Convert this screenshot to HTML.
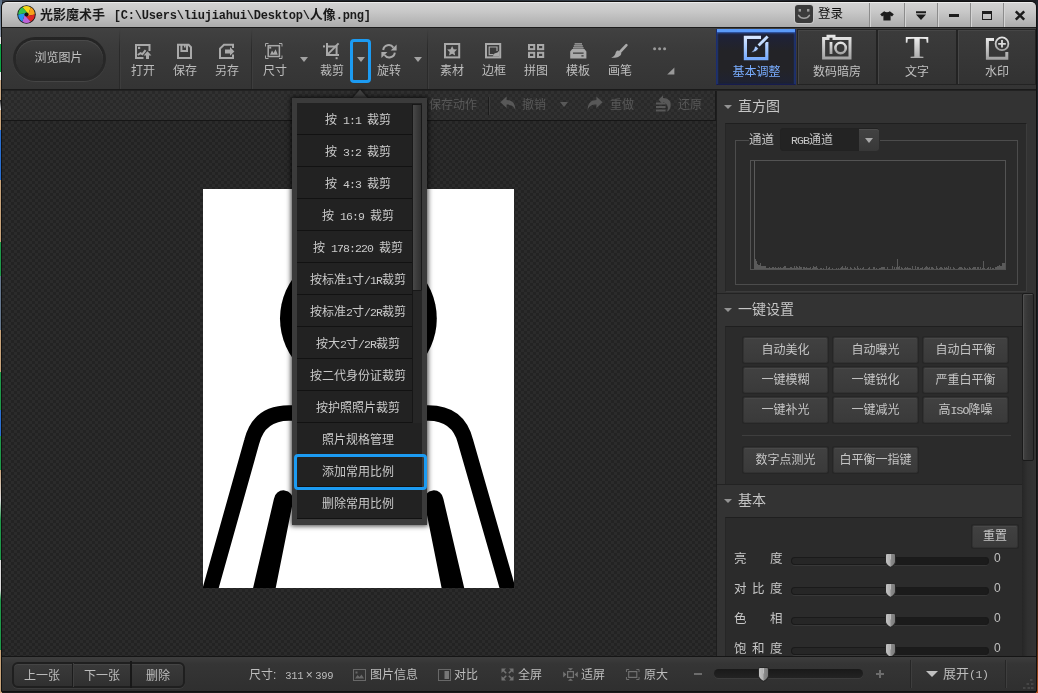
<!DOCTYPE html>
<html lang="zh">
<head>
<meta charset="utf-8">
<title>光影魔术手</title>
<style>
*{box-sizing:border-box;margin:0;padding:0}
html,body{width:1038px;height:693px;overflow:hidden;background:#1a1c22}
body{position:relative;font-family:"Liberation Sans","Noto Sans CJK SC",sans-serif;font-size:12px;color:#c4c4c4;line-height:1}
.a{position:absolute}
.t{position:absolute;white-space:nowrap;text-align:center;line-height:14px;font-size:12px}
svg{position:absolute;overflow:visible}
/* desktop slivers */
#deskL{left:0;top:0;width:2px;height:693px;background:linear-gradient(#5b6f86 0,#7d8da0 30px,#8a94a4 30px,#8a94a4 37px,#e6e6e6 37px,#e6e6e6 44px,#0ea244 44px,#0ea244 72px,#e6e6e6 72px,#e6e6e6 80px,#c9a884 80px,#c9a884 100px,#222 100px,#eee 110px,#c9a47a 110px,#c9a47a 130px,#2a6fd0 130px,#2a6fd0 180px,#c9a47a 180px,#c9a47a 242px,#1f9a4a 242px,#1f9a4a 276px,#66788e 276px,#66788e 330px,#c9a47a 330px,#c9a47a 372px,#1f9a4a 372px,#1f9a4a 410px,#2a6fd0 410px,#2a6fd0 436px,#1f9a4a 436px,#1f9a4a 470px,#c9a47a 470px,#ddd 500px,#1f9a4a 520px,#1f9a4a 560px,#ddd 560px,#ddd 590px,#1f9a4a 600px,#1f9a4a 650px,#c9a47a 650px,#c9a47a 693px)}
#deskR{left:1036px;top:0;width:2px;height:693px;background:linear-gradient(#20242c 0,#1b1e26 300px,#221c1c 560px,#5a2a14 640px,#b4501a 693px)}
#deskT{left:0;top:0;width:1038px;height:2px;background:linear-gradient(90deg,#3a4250 0,#20242a 8%,#2c323c 20%,#1e2228 35%,#2a3038 50%,#4a5666 66%,#20242a 76%,#15171a 84%,#1c1e22 100%)}
#deskB{left:0;top:691px;width:1038px;height:2px;background:#1b1b1b}
/* window */
#win{left:1px;top:1px;width:1036px;height:691px;background:#2b2b2b;border:1px solid #111;border-radius:6px 6px 0 0}
/* title */
#title{left:2px;top:2px;width:1034px;height:25px;border-radius:5px 5px 0 0;background:linear-gradient(#d2d2d2 0,#c9c9c9 8px,#b9b9b9 17px,#a9a9a9 25px);border-top:1px solid #ebebeb}
#title .tt{left:38px;top:4px;font-size:13px;line-height:16px;font-weight:bold;color:#1a1a1a;white-space:nowrap}
#title .tt span{font-family:"Liberation Mono",monospace;font-size:12px;letter-spacing:-0.2px}
.tsep{top:0;width:2px;height:25px;background:linear-gradient(90deg,#8c8c8c 50%,#d4d4d4 50%)}
/* toolbar */
#tb{left:2px;top:27px;width:1034px;height:62px;background:linear-gradient(#1c1c1c 0,#1c1c1c 1px,#414141 1px,#3b3b3b 20px,#343434 61px);}
#tbline{left:2px;top:89px;width:1034px;height:2px;background:linear-gradient(#1a1a1a 0,#1a1a1a 1px,#222 1px,#222 2px)}
.vsep{width:2px;background:linear-gradient(90deg,#2a2a2a 50%,#3d3d3d 50%);-webkit-mask-image:linear-gradient(transparent 0,#000 35%);mask-image:linear-gradient(transparent 0,#000 35%)}
.tl{color:#bdbdbd}

/* browse button */
#browse{left:13px;top:37px;width:93px;height:44px;border-radius:22px;background:linear-gradient(#242424,#2a2a2a);box-shadow:0 1px 0 #454545}
#browse i{position:absolute;left:3px;top:3px;width:87px;height:38px;border-radius:19px;background:linear-gradient(#3d3d3d,#333 45%,#2c2c2c);box-shadow:inset 0 1px 0 #4a4a4a}
#browse b{position:absolute;left:-1px;top:14px;width:93px;text-align:center;font-weight:normal;font-size:12px;line-height:14px;color:#c2c2c2}
.ic{fill:none;stroke:#a9a9a9;stroke-width:2}
.if{fill:#a9a9a9;stroke:none}
.dd{width:0;height:0;border:4px solid transparent;border-top:5px solid #a2a2a2;border-bottom:0}
#cropdd{left:350px;top:39px;width:21px;height:44px;border:3px solid #1c9bf2;border-radius:4px}
/* tabs */
.tab{top:29px;width:80px;height:56px;background:linear-gradient(#3b3b3b,#323232);border:1px solid #232323;box-shadow:inset 1px 1px 0 #464646}
.tab.sel{background:linear-gradient(#1c2448 0,#1f2236 9px,#232327 22px,#232327 40px,#1e2234 56px);border:1px solid #1c2c70;border-top:0;border-bottom-color:#171b4c;box-shadow:inset 0 3px 0 #5b9bfa,inset 0 4px 2px #3464c0,inset 1px 0 2px #1a2448,inset -1px 0 2px #1a2448}
.tabt{color:#c0c0c0}

.tk{fill:#1c1c1c}
/* canvas */
.chk{background-image:linear-gradient(45deg,rgba(255,255,255,.036) 25%,transparent 25%,transparent 75%,rgba(255,255,255,.036) 75%),linear-gradient(45deg,rgba(255,255,255,.036) 25%,transparent 25%,transparent 75%,rgba(255,255,255,.036) 75%);background-size:6px 6px;background-position:0 0,3px 3px}
#ctb{left:2px;top:91px;width:714px;height:30px;background-color:#292929;border-right:1px solid #191919;border-bottom:1px solid #161616}
#cv{left:2px;top:121px;width:714px;height:535px;background-color:#232323}
.dis{color:#585858}
#photo{left:203px;top:189px;width:311px;height:399px;background:#fff;overflow:hidden}

/* right panel */
#rp{left:716px;top:91px;width:320px;height:565px;background:#333}
#rps{left:1022px;top:293px;width:14px;height:363px;background:linear-gradient(90deg,#262626,#303030 40%,#343434)}
#rpth{left:1022px;top:293px;width:12px;height:168px;border:1px solid #1a1a1a;border-radius:2px;background:linear-gradient(90deg,#424242,#363636 50%,#303030);box-shadow:inset 1px 1px 0 #505050}
.sh{left:717px;width:305px;height:33px;background:#333;border-top:1px solid #232323}
.sb{left:725px;width:297px;background:#2b2b2b;border-top:1px solid #1f1f1f;border-left:1px solid #262626}
.sht{font-size:14px;line-height:18px;color:#c6c6c6;white-space:nowrap}
.tri{width:0;height:0;border:4px solid transparent;border-top:4.5px solid #939393;border-bottom:0}
.btn{height:26px;width:85px;background:linear-gradient(#414141,#3a3a3a);border:1px solid #323232;box-shadow:inset 0 1px 0 #484848,0 0 0 1px #262626;border-radius:2px;color:#c6c6c6;font-size:12px;line-height:24px;text-align:center;white-space:nowrap}
.trk{left:791px;width:198px;height:8px;border-radius:4px;background:linear-gradient(90deg,#262626 0,#262626 48%,#1b1b1b 50%);box-shadow:0 1px 0 #383838,inset 0 0 0 1px #1a1a1a;margin-top:1px}
.thb{width:11px;height:15px}
.lbl{left:734px;width:50px;font-size:12.5px;line-height:16px;color:#c6c6c6;white-space:nowrap;text-align:justify;letter-spacing:0}
.val{left:994px;font-size:12px;line-height:14px;color:#c0c0c0}
/* status bar */
#sbar{left:2px;top:656px;width:1034px;height:35px;background:linear-gradient(#151515 0,#151515 1px,#3d3d3d 1px,#353535 8px,#2f2f2f 35px)}
.sbt{color:#bdbdbd;font-size:12px;line-height:16px;white-space:nowrap}

/* dropdown menu */
#menu{left:292px;top:98px;width:135px;height:427px;background:#3b3b3b;box-shadow:0 0 5px 1px rgba(0,0,0,.75)}
#menu .in{left:5px;top:5px;width:125px;height:416px;background:#121212}
.mi{left:5px;width:125px;height:31px;background:#222;font-size:12px;line-height:34px;text-align:center;color:#cacaca;white-space:nowrap;padding-right:3px}
.mi span{font-family:"Liberation Mono",monospace;font-size:11.5px;letter-spacing:-0.9px}
#mtrk{left:120px;top:6px;width:10px;height:319px;background:#262626;border-left:1px solid #161616}
#mthb{left:120px;top:6px;width:10px;height:187px;background:linear-gradient(90deg,#484848,#393939 60%,#303030);border:1px solid #181818;border-radius:1px}
#msel{left:2px;top:356px;width:133px;height:36px;border:3px solid #1c9bf2;border-radius:4px}
</style>
</head>
<body>
<div id="root" class="a" style="left:0;top:0;width:1038px;height:693px;will-change:transform">

<div class="a" id="deskT"></div><div class="a" id="deskB"></div>
<div class="a" id="deskL"></div><div class="a" id="deskR"></div>
<div class="a" id="win"></div>

<!-- ===== TITLE BAR ===== -->
<div class="a" id="title">
  <svg style="left:14.5px;top:2px" width="19" height="19" viewBox="0 0 19 19">
    <circle cx="9.5" cy="9.5" r="9.3" fill="#1a1a1a"/>
    <path d="M10.30 7.78 L5.35 2.31 A8.3 8.3 0 0 1 13.65 2.31 L11.39 9.33Z" fill="#f6d618"/>
    <path d="M11.39 9.33 L13.65 2.31 A8.3 8.3 0 0 1 17.80 9.50 L10.59 11.06Z" fill="#f7a21a"/>
    <path d="M10.59 11.06 L17.80 9.50 A8.3 8.3 0 0 1 13.65 16.69 L8.70 11.22Z" fill="#df2626"/>
    <path d="M8.70 11.22 L13.65 16.69 A8.3 8.3 0 0 1 5.35 16.69 L7.61 9.67Z" fill="#bd62d8"/>
    <path d="M7.61 9.67 L5.35 16.69 A8.3 8.3 0 0 1 1.20 9.50 L8.41 7.94Z" fill="#2494f0"/>
    <path d="M8.41 7.94 L1.20 9.50 A8.3 8.3 0 0 1 5.35 2.31 L10.30 7.78Z" fill="#34c24a"/>
    <circle cx="9.5" cy="9.5" r="2" fill="#141414"/>
  </svg>
  <div class="a tt">光影魔术手 <span style="margin-left:5px">[C:\Users\liujiahui\Desktop\</span>人像<span>.png]</span></div>
  <div class="a" style="left:793px;top:2px;width:18px;height:18px;border-radius:3px;background:#3b3b3b;box-shadow:0 0 0 1px #c8c8c8"></div>
  <svg style="left:793px;top:2px" width="18" height="18" viewBox="0 0 18 18">
    <rect x="3.6" y="4" width="2.4" height="2.6" fill="#9c9c9c"/><rect x="12" y="4" width="2.4" height="2.6" fill="#9c9c9c"/>
    <path d="M3.6 10.4 C6 14.2 12 14.2 14.4 10.4" fill="none" stroke="#a0a0a0" stroke-width="1.5" stroke-linecap="round"/>
  </svg>
  <div class="a" style="left:816px;top:3px;font-size:12.5px;line-height:16px;color:#0c0c0c;white-space:nowrap">登录</div>
  <div class="a tsep" style="left:867px"></div>
  <div class="a tsep" style="left:902px"></div>
  <div class="a tsep" style="left:935px"></div>
  <div class="a tsep" style="left:968px"></div>
  <div class="a tsep" style="left:1001px"></div>
  <svg style="left:878px;top:7.5px" width="14" height="10" viewBox="0 0 14 10"><path class="tk" d="M4.2 0.2 C5.6 1.6 8.4 1.6 9.8 0.2 L13.8 3.2 L12 5.6 L10.6 4.6 V9.6 H3.4 V4.6 L2 5.6 L0.2 3.2Z"/></svg>
  <svg style="left:914px;top:8px" width="10" height="10" viewBox="0 0 10 10"><path class="tk" d="M0 0.2 H10 V2.2 H0Z M0 3.6 H10 L5 9Z"/></svg>
  <div class="a" style="left:947px;top:11px;width:10px;height:3px;background:#1c1c1c"></div>
  <div class="a" style="left:980px;top:8px;width:10px;height:9px;border:1px solid #1c1c1c;border-top-width:3px"></div>
  <svg style="left:1013px;top:8px" width="10" height="9" viewBox="0 0 10 9"><path d="M0.8 0.4 L9.2 8.6 M9.2 0.4 L0.8 8.6" stroke="#1c1c1c" stroke-width="2.5" fill="none"/></svg>
</div>

<!-- ===== TOOLBAR ===== -->
<div class="a" id="tb"></div>
<div class="a" id="tbline"></div>
<div class="a" id="browse"><i></i><b>浏览图片</b></div>
<div class="a vsep" style="left:119px;top:29px;height:60px"></div>
<!-- open -->
<svg style="left:135px;top:43px" width="17" height="17" viewBox="0 0 17 17">
  <path class="ic" d="M8.5 15 H1 V2 H14.5 V8"/>
  <rect class="if" x="3" y="3.8" width="2.2" height="2.2"/>
  <path class="ic" d="M2.8 12 L5.5 10.2 L7.4 11.2 L10.6 7.2" stroke-width="2.2"/>
  <path class="if" d="M12.5 8.2 L16.4 12.4 H14 V16 H11 V12.4 H8.6Z"/>
</svg>
<div class="t tl" style="left:123px;top:64px;width:40px">打开</div>
<!-- save -->
<svg style="left:177px;top:43px" width="16" height="17" viewBox="0 0 16 17">
  <path class="ic" d="M1 1.8 H11.6 L14 4.2 V15 H1Z"/>
  <path class="ic" d="M4.4 2 V8 H10 V2"/>
  <rect class="if" x="7" y="1.5" width="1.6" height="3"/>
</svg>
<div class="t tl" style="left:165px;top:64px;width:40px">保存</div>
<!-- save as -->
<svg style="left:219px;top:43px" width="17" height="17" viewBox="0 0 17 17">
  <path class="ic" d="M14 5 V1.8 H5 L1 5.6 V15 H14 V11.6"/>
  <path class="if" d="M6 6.4 H11 V4 L15.4 8.4 L11 12.8 V10.4 H6Z"/>
</svg>
<div class="t tl" style="left:207px;top:64px;width:40px">另存</div>
<div class="a vsep" style="left:251px;top:29px;height:60px"></div>
<!-- size -->
<svg style="left:265px;top:43px" width="18" height="16" viewBox="0 0 18 16">
  <path d="M0.5 3.5 V0.5 H3.5 M14 0.5 H17 V3.5 M17 12.5 V15.5 H14 M3.5 15.5 H0.5 V12.5" fill="none" stroke="#a9a9a9" stroke-width="1"/>
  <rect x="3.2" y="2.7" width="11.2" height="10.8" fill="none" stroke="#a9a9a9" stroke-width="1.5"/>
  <path class="if" d="M5 11.8 L7 7.6 L8.6 10 L10.6 6.2 L12.8 11.8Z"/>
  <rect class="if" x="4.2" y="3.6" width="2" height="2"/>
</svg>
<div class="t tl" style="left:255px;top:64px;width:40px">尺寸</div>
<div class="a dd" style="left:300px;top:57px"></div>
<!-- crop -->
<svg style="left:322px;top:42px" width="18" height="18" viewBox="0 0 18 18">
  <path class="ic" d="M5 1 V13 H17" stroke-width="2"/>
  <path class="ic" d="M5 4.4 H14.6 V13" stroke-width="2"/>
  <path class="ic" d="M5.4 12.6 L16.6 1.4" stroke-width="1.8"/>
  <rect class="if" x="1" y="3.4" width="2" height="2"/>
  <rect class="if" x="13.6" y="15.2" width="2" height="2"/>
</svg>
<div class="t tl" style="left:312px;top:64px;width:40px">裁剪</div>
<div class="a" id="cropdd"></div>
<div class="a dd" style="left:357px;top:57px"></div>
<!-- rotate -->
<svg style="left:381px;top:44px" width="16" height="15" viewBox="0 0 16 15">
  <path class="ic" d="M2.2 6 A5.6 5.6 0 0 1 12.4 3.6" stroke-width="2.2"/>
  <path class="if" d="M15.6 0.6 V6.6 H9.6Z"/>
  <path class="ic" d="M13.8 8.6 A5.6 5.6 0 0 1 3.6 11" stroke-width="2.2"/>
  <path class="if" d="M0.4 14 V8 H6.4Z"/>
</svg>
<div class="t tl" style="left:369px;top:64px;width:40px">旋转</div>
<div class="a dd" style="left:414px;top:57px"></div>
<div class="a vsep" style="left:427px;top:29px;height:60px"></div>
<!-- material -->
<svg style="left:444px;top:43px" width="16" height="16" viewBox="0 0 16 16">
  <rect class="ic" x="1" y="1" width="14.2" height="13.4"/>
  <path class="if" d="M8.1 2.9 L9.6 6.2 L13.1 6.6 L10.5 9 L11.2 12.5 L8.1 10.7 L5 12.5 L5.7 9 L3.1 6.6 L6.6 6.2Z"/>
</svg>
<div class="t tl" style="left:432px;top:64px;width:40px">素材</div>
<!-- border -->
<svg style="left:485px;top:43px" width="16" height="16" viewBox="0 0 16 16">
  <rect class="ic" x="1" y="1" width="14.2" height="13.4"/>
  <path d="M12 8 V4 H4.2 V11.6 H8.6" fill="none" stroke="#a9a9a9" stroke-width="1.2"/>
  <path class="if" d="M14.4 7.6 V13.6 H7.6 L9.4 10.6 L12.4 9.6Z"/>
</svg>
<div class="t tl" style="left:474px;top:64px;width:40px">边框</div>
<!-- collage -->
<svg style="left:528px;top:44px" width="16" height="14" viewBox="0 0 16 14">
  <rect class="ic" x="1" y="1" width="5.2" height="4.2"/><rect class="ic" x="10" y="1" width="5.2" height="4.2"/>
  <rect class="ic" x="1" y="8.8" width="5.2" height="4.2"/><rect class="ic" x="10" y="8.8" width="5.2" height="4.2"/>
</svg>
<div class="t tl" style="left:516px;top:64px;width:40px">拼图</div>
<!-- template -->
<svg style="left:570px;top:43px" width="17" height="16" viewBox="0 0 17 16">
  <path d="M4.6 0.8 H12 M3.8 2.8 H12.8 M3 4.8 H13.6" fill="none" stroke="#a9a9a9" stroke-width="1.2"/>
  <path class="if" d="M2.2 6 H14.4 L16.4 8.6 V15.4 H0.2 V8.6Z M3 9.6 V10.8 H13.6 V9.6Z M11.4 12.2 V13.6 H13.6 V12.2Z" fill-rule="evenodd"/>
</svg>
<div class="t tl" style="left:558px;top:64px;width:40px">模板</div>
<!-- brush -->
<svg style="left:611px;top:44px" width="17" height="15" viewBox="0 0 17 15">
  <path d="M15.4 1.2 L9 8" fill="none" stroke="#a9a9a9" stroke-width="2.6" stroke-linecap="round"/>
  <path class="if" d="M7.4 6.6 L10.4 9.6 C9.4 13.2 4.4 14.4 0.2 13.6 C3 12.6 4.4 10.8 4.8 8.2 C5.4 7 6.4 6.4 7.4 6.6Z"/>
</svg>
<div class="t tl" style="left:600px;top:64px;width:40px">画笔</div>
<!-- more -->
<svg style="left:653px;top:47px" width="14" height="4" viewBox="0 0 14 4">
  <circle cx="1.6" cy="1.8" r="1.5" fill="#9a9a9a"/><circle cx="6.6" cy="1.8" r="1.5" fill="#9a9a9a"/><circle cx="11.6" cy="1.8" r="1.5" fill="#9a9a9a"/>
</svg>
<svg style="left:667px;top:67px" width="8" height="8" viewBox="0 0 8 8"><path d="M7.4 0.4 V7.6 H0.2Z" fill="#999"/></svg>

<!-- tabs -->
<div class="a tab sel" style="left:716px"></div>
<div class="a tab" style="left:797px"></div>
<div class="a tab" style="left:877px"></div>
<div class="a tab" style="left:957px;width:79px"></div>
<svg style="left:743px;top:33px" width="28" height="28" viewBox="0 0 28 28">
  <defs><linearGradient id="gb" x1="0" y1="0" x2="0" y2="1"><stop offset="0" stop-color="#d6e6ff"/><stop offset="1" stop-color="#78acff"/></linearGradient>
  <linearGradient id="gw" x1="0" y1="0" x2="0" y2="1"><stop offset="0" stop-color="#e6e6e6"/><stop offset="1" stop-color="#a4a4a4"/></linearGradient></defs>
  <path d="M18 4.4 H2.4 V25.6 H23.8 V9" fill="none" stroke="url(#gb)" stroke-width="3.2"/>
  <path d="M23.6 1.4 L26.6 4.4 L16.6 14.6 L13.6 11.6Z" fill="#c4dcff" stroke="#20222c" stroke-width="1.4"/>
  <path d="M12.8 13 L15.4 15.6 C14.4 18.4 11 19.4 7.4 19.6 C10.2 18 11.4 16 11.4 14.2Z" fill="#a6c8ff" stroke="#20222c" stroke-width="0.8"/>
</svg>
<div class="t" style="left:716px;top:65px;width:81px;color:#79adff">基本调整</div>
<svg style="left:822px;top:35px" width="30" height="25" viewBox="0 0 30 25">
  <path d="M1.6 3.6 H6 V1.2 H12 V3.6 H28 V23 H1.6Z" fill="none" stroke="url(#gw)" stroke-width="3"/>
  <rect x="7.6" y="7" width="2.8" height="12" fill="url(#gw)"/>
  <circle cx="18.6" cy="13" r="5.2" fill="none" stroke="url(#gw)" stroke-width="2.6"/>
</svg>
<div class="t tabt" style="left:797px;top:65px;width:80px">数码暗房</div>
<div class="a" style="left:903px;top:32px;width:28px;height:32px;font-family:'Liberation Serif',serif;font-weight:bold;font-size:31px;line-height:32px;text-align:center;color:#cfcfcf;transform:scaleX(1.14);background:linear-gradient(#eaeaea 20%,#a8a8a8 85%);-webkit-background-clip:text;background-clip:text;-webkit-text-fill-color:transparent">T</div>
<div class="t tabt" style="left:877px;top:65px;width:80px">文字</div>
<svg style="left:985px;top:35px" width="26" height="26" viewBox="0 0 26 26">
  <path d="M9 4.4 H2.4 V23.2 H21.8 V17" fill="none" stroke="url(#gw)" stroke-width="3"/>
  <circle cx="17" cy="8.8" r="6.4" fill="none" stroke="url(#gw)" stroke-width="1.8"/>
  <path d="M13.2 8.8 H20.8 M17 5 V12.6" stroke="#dcdcdc" stroke-width="1.8" fill="none"/>
</svg>
<div class="t tabt" style="left:957px;top:65px;width:80px">水印</div>



<!-- ===== CANVAS AREA ===== -->
<div class="a chk" id="cv"></div>
<div class="a chk" id="ctb"></div>
<div class="t dis" style="left:428px;top:98px;width:50px">保存动作</div>
<div class="a" style="left:488px;top:97px;width:1px;height:18px;background:#1c1c1c;box-shadow:1px 0 0 #3a3a3a"></div>
<svg style="left:500px;top:96px" width="16" height="15" viewBox="0 0 16 15"><path d="M6.6 0.6 V4 C11.6 4 15.4 7 15.4 14 C13.6 9.8 11 8.6 6.6 8.6 V12 L0.4 6.3Z" fill="#585858"/></svg>
<div class="t dis" style="left:520px;top:98px;width:28px">撤销</div>
<div class="a dd" style="left:560px;top:102px;border-top-color:#585858"></div>
<svg style="left:587px;top:96px" width="16" height="15" viewBox="0 0 16 15"><path d="M9.4 0.6 V4 C4.4 4 0.6 7 0.6 14 C2.4 9.8 5 8.6 9.4 8.6 V12 L15.6 6.3Z" fill="#585858"/></svg>
<div class="t dis" style="left:608px;top:98px;width:28px">重做</div>
<svg style="left:656px;top:95px" width="16" height="17" viewBox="0 0 16 17"><path d="M0 7.6 H9.6 V9.6 H0Z M0 11 H9.6 V13 H0Z M0 14.4 H9.6 V16.4 H0Z" fill="#585858"/><path d="M7 0.2 V3 C12 3 15.6 6 14.6 11.4 C14 14.4 12.6 15.8 11 16.4 C12.6 13.6 12.4 9 7 7 V9.4 L2.6 4.8Z" fill="#585858"/></svg>
<div class="t dis" style="left:676px;top:98px;width:28px">还原</div>

<div class="a" id="photo">
  <svg style="left:0;top:0" width="311" height="399" viewBox="0 0 311 399">
    <ellipse cx="155.4" cy="129.5" rx="78.4" ry="73" fill="#000"/>
    <path d="M4.6 410 L48.8 252.5 Q56 224 86 224 H225.3 Q255.3 224 262.5 252.5 L307.7 410" fill="none" stroke="#000" stroke-width="15.5" stroke-linejoin="round"/>
    <path d="M221.2 312 A9.6 9.6 0 0 1 240.4 310 L263.8 410 H240.8Z" fill="#000"/>
    <path d="M90.1 312 A9.6 9.6 0 0 0 70.9 310 L47.5 410 H70.5Z" fill="#000"/>
  </svg>
</div>

<!-- ===== RIGHT PANEL ===== -->
<div class="a" id="rp"></div>
<div class="a" id="rps"></div>
<div class="a" style="left:716px;top:91px;width:1px;height:565px;background:#1d1d1d"></div>
<div class="a" id="rpth"></div>
<!-- histogram -->
<div class="a tri" style="left:724px;top:105px"></div>
<div class="a sht" style="left:738px;top:97px">直方图</div>
<div class="a sb" style="top:123px;height:169px;width:302px;border-right:1px solid #3c3c3c;border-bottom:1px solid #3c3c3c"></div>
<div class="a" style="left:735px;top:140px;width:283px;height:145px;border:1px solid #4c4c4c"></div>
<div class="a" style="left:749px;top:132px;width:131px;height:16px;background:#2b2b2b"></div>
<div class="a" style="left:749px;top:132px;font-size:12.5px;line-height:16px;color:#c6c6c6">通道</div>
<div class="a" style="left:780px;top:128px;width:99px;height:23px;background:#232323;border:1px solid #222;border-radius:3px"></div>
<div class="a" style="left:859px;top:129px;width:20px;height:22px;background:linear-gradient(#424242,#383838);border-radius:0 3px 3px 0;box-shadow:inset 0 1px 0 #4c4c4c"></div>
<div class="a dd" style="left:865px;top:138px;border-top-color:#a8a8a8"></div>
<div class="a" style="left:791px;top:132px;font-size:12px;line-height:16px;color:#c6c6c6;white-space:nowrap"><span style="font-family:'Liberation Mono',monospace;font-size:11.5px;letter-spacing:-0.9px">RGB</span>通道</div>
<div class="a" style="left:750px;top:160px;width:256px;height:110px;background:#2a2a2a;border:1px solid #535353"></div>
<svg style="left:751px;top:161px" width="254" height="108" viewBox="0 0 254 108" id="histo"><path d="M3 108v-108h1v108zM4 108v-10h1v10zM5 108v-8h1v8zM6 108v-5h1v5zM7 108v-4h1v4zM8 108v-4h1v4zM9 108v-6h1v6zM10 108v-3h1v3zM11 108v-3h1v3zM12 108v-3h1v3zM13 108v-3h1v3zM14 108v-3h1v3zM15 108v-1h1v1zM16 108v-1h1v1zM17 108v-1h1v1zM18 108v-2h1v2zM19 108v-1h1v1zM20 108v-1h1v1zM21 108v-2h1v2zM22 108v-2h1v2zM23 108v-1h1v1zM24 108v-2h1v2zM25 108v-1h1v1zM26 108v-1h1v1zM27 108v-2h1v2zM28 108v-1h1v1zM29 108v-2h1v2zM30 108v-1h1v1zM31 108v-1h1v1zM32 108v-2h1v2zM33 108v-3h1v3zM34 108v-3h1v3zM35 108v-1h1v1zM36 108v-1h1v1zM37 108v-1h1v1zM38 108v-1h1v1zM39 108v-2h1v2zM40 108v-2h1v2zM41 108v-1h1v1zM42 108v-1h1v1zM43 108v-3h1v3zM44 108v-1h1v1zM45 108v-3h1v3zM46 108v-2h1v2zM47 108v-1h1v1zM48 108v-3h1v3zM49 108v-2h1v2zM50 108v-2h1v2zM52 108v-2h1v2zM53 108v-2h1v2zM54 108v-1h1v1zM55 108v-2h1v2zM56 108v-1h1v1zM57 108v-1h1v1zM58 108v-1h1v1zM59 108v-2h1v2zM61 108v-1h1v1zM62 108v-3h1v3zM63 108v-2h1v2zM64 108v-2h1v2zM65 108v-3h1v3zM66 108v-1h1v1zM69 108v-1h1v1zM70 108v-1h1v1zM72 108v-1h1v1zM75 108v-3h1v3zM77 108v-1h1v1zM78 108v-2h1v2zM81 108v-1h1v1zM85 108v-1h1v1zM87 108v-1h1v1zM89 108v-1h1v1zM90 108v-2h1v2zM91 108v-3h1v3zM92 108v-1h1v1zM93 108v-1h1v1zM94 108v-3h1v3zM95 108v-1h1v1zM96 108v-2h1v2zM99 108v-2h1v2zM100 108v-1h1v1zM103 108v-2h1v2zM104 108v-1h1v1zM106 108v-3h1v3zM107 108v-1h1v1zM109 108v-1h1v1zM111 108v-1h1v1zM112 108v-2h1v2zM117 108v-1h1v1zM118 108v-2h1v2zM122 108v-2h1v2zM123 108v-2h1v2zM125 108v-1h1v1zM128 108v-1h1v1zM129 108v-1h1v1zM130 108v-2h1v2zM131 108v-2h1v2zM132 108v-2h1v2zM133 108v-2h1v2zM136 108v-2h1v2zM141 108v-3h1v3zM143 108v-2h1v2zM145 108v-2h1v2zM146 108v-10h1v10zM147 108v-2h1v2zM148 108v-3h1v3zM150 108v-2h1v2zM151 108v-1h1v1zM153 108v-1h1v1zM154 108v-2h1v2zM155 108v-1h1v1zM156 108v-2h1v2zM157 108v-1h1v1zM158 108v-1h1v1zM159 108v-1h1v1zM161 108v-3h1v3zM164 108v-3h1v3zM166 108v-2h1v2zM167 108v-2h1v2zM169 108v-1h1v1zM170 108v-1h1v1zM171 108v-2h1v2zM173 108v-1h1v1zM174 108v-2h1v2zM175 108v-3h1v3zM176 108v-2h1v2zM177 108v-1h1v1zM178 108v-2h1v2zM180 108v-2h1v2zM181 108v-2h1v2zM182 108v-1h1v1zM185 108v-3h1v3zM186 108v-1h1v1zM188 108v-1h1v1zM189 108v-2h1v2zM190 108v-2h1v2zM191 108v-1h1v1zM193 108v-2h1v2zM194 108v-1h1v1zM195 108v-2h1v2zM196 108v-1h1v1zM197 108v-3h1v3zM199 108v-2h1v2zM202 108v-2h1v2zM203 108v-1h1v1zM207 108v-1h1v1zM208 108v-2h1v2zM209 108v-2h1v2zM210 108v-2h1v2zM211 108v-1h1v1zM213 108v-2h1v2zM214 108v-1h1v1zM216 108v-1h1v1zM218 108v-2h1v2zM219 108v-1h1v1zM221 108v-1h1v1zM222 108v-2h1v2zM223 108v-2h1v2zM224 108v-2h1v2zM226 108v-2h1v2zM227 108v-2h1v2zM229 108v-2h1v2zM231 108v-1h1v1zM232 108v-8h1v8zM233 108v-1h1v1zM236 108v-1h1v1zM237 108v-2h1v2zM239 108v-2h1v2zM241 108v-1h1v1zM242 108v-1h1v1zM244 108v-2h1v2zM245 108v-2h1v2zM246 108v-3h1v3zM247 108v-3h1v3zM248 108v-4h1v4zM249 108v-3h1v3zM250 108v-3h1v3zM251 108v-6h1v6zM252 108v-6h1v6zM253 108v-6h1v6z" fill="#5a5a5a"/></svg>
<!-- one-key -->
<div class="a sh" style="top:293px"></div>
<div class="a tri" style="left:724px;top:308px"></div>
<div class="a sht" style="left:738px;top:300px">一键设置</div>
<div class="a sb" style="top:326px;height:158px"></div>
<div class="a btn" style="left:743px;top:337px;width:85px">自动美化</div>
<div class="a btn" style="left:833px;top:337px;width:85px">自动曝光</div>
<div class="a btn" style="left:923px;top:337px;width:85px">自动白平衡</div>
<div class="a btn" style="left:743px;top:367px;width:85px">一键模糊</div>
<div class="a btn" style="left:833px;top:367px;width:85px">一键锐化</div>
<div class="a btn" style="left:923px;top:367px;width:85px">严重白平衡</div>
<div class="a btn" style="left:743px;top:397px;width:85px">一键补光</div>
<div class="a btn" style="left:833px;top:397px;width:85px">一键减光</div>
<div class="a btn" style="left:923px;top:397px;width:85px">高<span style="font-family:'Liberation Mono',monospace;font-size:11.5px;letter-spacing:-0.9px">ISO</span>降噪</div>
<div class="a" style="left:742px;top:435px;width:269px;height:1px;background:#3e3e3e"></div>
<div class="a btn" style="left:743px;top:447px;width:85px">数字点测光</div>
<div class="a btn" style="left:833px;top:447px;width:85px">白平衡一指键</div>

<!-- basic -->
<div class="a sh" style="top:484px"></div>
<div class="a tri" style="left:724px;top:499px"></div>
<div class="a sht" style="left:738px;top:491px">基本</div>
<div class="a sb" style="top:517px;height:139px"></div>
<div class="a btn" style="height:23px;line-height:21px;left:972px;top:525px;width:46px">重置</div>
<div class="a lbl" style="top:551px"><span class="a" style="left:0">亮</span><span class="a" style="left:18px"></span><span class="a" style="left:36px">度</span></div>
<div class="a trk" style="top:556px"></div>
<svg class="thb" style="left:884.5px;top:553px" width="11" height="15" viewBox="0 0 11 14" preserveAspectRatio="none"><path d="M0.5 2 Q0.5 0.5 2 0.5 H9 Q10.5 0.5 10.5 2 V8 Q10.5 11 5.5 13.6 Q0.5 11 0.5 8Z" fill="url(#gt)" stroke="#262626" stroke-width="1"/><path d="M5.5 1 V6" stroke="#e0e0e0" stroke-width="0.8" opacity=".6"/></svg>
<div class="a val" style="top:551px">0</div>
<div class="a lbl" style="top:581px"><span class="a" style="left:0">对</span><span class="a" style="left:18px">比</span><span class="a" style="left:36px">度</span></div>
<div class="a trk" style="top:586px"></div>
<svg class="thb" style="left:884.5px;top:583px" width="11" height="15" viewBox="0 0 11 14" preserveAspectRatio="none"><path d="M0.5 2 Q0.5 0.5 2 0.5 H9 Q10.5 0.5 10.5 2 V8 Q10.5 11 5.5 13.6 Q0.5 11 0.5 8Z" fill="url(#gt)" stroke="#262626" stroke-width="1"/><path d="M5.5 1 V6" stroke="#e0e0e0" stroke-width="0.8" opacity=".6"/></svg>
<div class="a val" style="top:581px">0</div>
<div class="a lbl" style="top:611px"><span class="a" style="left:0">色</span><span class="a" style="left:18px"></span><span class="a" style="left:36px">相</span></div>
<div class="a trk" style="top:616px"></div>
<svg class="thb" style="left:884.5px;top:613px" width="11" height="15" viewBox="0 0 11 14" preserveAspectRatio="none"><path d="M0.5 2 Q0.5 0.5 2 0.5 H9 Q10.5 0.5 10.5 2 V8 Q10.5 11 5.5 13.6 Q0.5 11 0.5 8Z" fill="url(#gt)" stroke="#262626" stroke-width="1"/><path d="M5.5 1 V6" stroke="#e0e0e0" stroke-width="0.8" opacity=".6"/></svg>
<div class="a val" style="top:611px">0</div>
<div class="a lbl" style="top:641px"><span class="a" style="left:0">饱</span><span class="a" style="left:18px">和</span><span class="a" style="left:36px">度</span></div>
<div class="a trk" style="top:646px"></div>
<svg class="thb" style="left:884.5px;top:643px" width="11" height="15" viewBox="0 0 11 14" preserveAspectRatio="none"><path d="M0.5 2 Q0.5 0.5 2 0.5 H9 Q10.5 0.5 10.5 2 V8 Q10.5 11 5.5 13.6 Q0.5 11 0.5 8Z" fill="url(#gt)" stroke="#262626" stroke-width="1"/><path d="M5.5 1 V6" stroke="#e0e0e0" stroke-width="0.8" opacity=".6"/></svg>
<div class="a val" style="top:641px">0</div>

<svg width="0" height="0" style="left:0;top:0"><defs><linearGradient id="gt" x1="0" y1="0" x2="1" y2="0"><stop offset="0" stop-color="#c4c4c4"/><stop offset="0.48" stop-color="#b0b0b0"/><stop offset="0.52" stop-color="#8c8c8c"/><stop offset="1" stop-color="#787878"/></linearGradient></defs></svg>
<!-- ===== STATUS BAR ===== -->
<div class="a" id="sbar"></div>
<div class="a" style="left:12px;top:662px;width:173px;height:26px;border-radius:6px;background:linear-gradient(#3a3a3a,#303030);border:2px solid #1f1f1f;box-shadow:inset 0 1px 0 #454545,0 1px 0 #3c3c3c"></div>
<div class="a" style="left:72px;top:663px;width:1px;height:24px;background:#1c1c1c;box-shadow:1px 0 0 #3e3e3e"></div>
<div class="a" style="left:130px;top:661px;width:2px;height:27px;background:#181818"></div>
<div class="t sbt" style="left:12px;top:668px;width:60px">上一张</div>
<div class="t sbt" style="left:73px;top:668px;width:58px">下一张</div>
<div class="t sbt" style="left:132px;top:668px;width:52px">删除</div>
<div class="a sbt" style="left:249px;top:667px">尺寸:<span style="display:inline-block;width:9px"></span><span style="font-family:'Liberation Mono',monospace;font-size:10.5px;letter-spacing:-0.3px">311<span style="display:inline-block;width:12px;text-align:center;font-family:'Liberation Sans',sans-serif;font-size:12px;letter-spacing:0">×</span>399</span></div>
<svg style="left:353px;top:669px" width="13" height="12" viewBox="0 0 13 12"><rect x="0.5" y="0.5" width="12" height="11" fill="none" stroke="#686868" stroke-width="1"/><path d="M2 9.5 L4.5 6 L6.5 8 L8.5 5.5 L11 9.5Z" fill="#686868"/><rect x="2.5" y="2.5" width="2" height="2" fill="#686868"/></svg>
<div class="a sbt" style="left:370px;top:667px">图片信息</div>
<svg style="left:438px;top:669px" width="13" height="12" viewBox="0 0 13 12"><rect x="0.5" y="0.5" width="12" height="11" fill="none" stroke="#686868" stroke-width="1"/><rect x="6.5" y="2" width="4.5" height="8" fill="#777"/></svg>
<div class="a sbt" style="left:454px;top:667px">对比</div>
<svg style="left:501px;top:668px" width="13" height="13" viewBox="0 0 13 13"><path d="M0.5 0.5 H5 L0.5 5Z M12.5 0.5 V5 L8 0.5Z M0.5 12.5 V8 L5 12.5Z M12.5 12.5 H8 L12.5 8Z" fill="#727272"/><path d="M2 2 L5.2 5.2 M11 2 L7.8 5.2 M2 11 L5.2 7.8 M11 11 L7.8 7.8" stroke="#727272" stroke-width="1.6"/></svg>
<div class="a sbt" style="left:518px;top:667px">全屏</div>
<svg style="left:563px;top:668px" width="15" height="13" viewBox="0 0 15 13"><rect x="4.6" y="3.6" width="5.8" height="5.8" fill="none" stroke="#727272" stroke-width="1.2"/><path d="M0.2 3.6 V9.4 L3.4 6.5Z M14.8 3.6 V9.4 L11.6 6.5Z M5 0.2 H10 L7.5 2.6Z M5 12.8 H10 L7.5 10.4Z" fill="#727272"/></svg>
<div class="a sbt" style="left:581px;top:667px">适屏</div>
<svg style="left:626px;top:669px" width="13.5" height="11" viewBox="0 0 15 11" preserveAspectRatio="none"><path d="M0.5 3 V0.5 H3.5 M11.5 0.5 H14.5 V3 M14.5 8 V10.5 H11.5 M3.5 10.5 H0.5 V8" fill="none" stroke="#727272"/><rect x="3" y="2.6" width="9" height="5.8" fill="none" stroke="#727272" stroke-width="1.2"/></svg>
<div class="a sbt" style="left:644px;top:667px">原大</div>
<div class="a" style="left:694px;top:673px;width:8px;height:2px;background:#6c6c6c"></div>
<div class="a" style="left:714px;top:669px;width:149px;height:9px;border-radius:5px;background:linear-gradient(#191919,#232323);box-shadow:0 1px 0 #3c3c3c"></div>
<svg class="thb" style="left:758px;top:667px" width="11" height="15" viewBox="0 0 11 14" preserveAspectRatio="none"><path d="M0.5 2 Q0.5 0.5 2 0.5 H9 Q10.5 0.5 10.5 2 V8 Q10.5 11 5.5 13.6 Q0.5 11 0.5 8Z" fill="url(#gt)" stroke="#262626" stroke-width="1"/><path d="M5.5 1 V6" stroke="#e0e0e0" stroke-width="0.8" opacity=".6"/></svg>
<div class="a" style="left:876px;top:673px;width:8px;height:2px;background:#6c6c6c"></div>
<div class="a" style="left:879px;top:670px;width:2px;height:8px;background:#6c6c6c"></div>
<div class="a" style="left:910px;top:660px;width:1px;height:28px;background:#262626;box-shadow:1px 0 0 #3e3e3e"></div>
<div class="a" style="left:926px;top:671px;width:0;height:0;border:6px solid transparent;border-top:6px solid #c0c0c0;border-bottom:0"></div>
<div class="a sbt" style="left:943px;top:666px;font-size:13px">展开<span style="font-family:'Liberation Mono',monospace;font-size:11.5px;letter-spacing:-0.4px">(1)</span></div>
<div class="a" style="left:1005px;top:660px;width:1px;height:28px;background:#262626;box-shadow:1px 0 0 #3e3e3e"></div>
<svg style="left:1022px;top:679px" width="12" height="10" viewBox="0 0 12 10"><path d="M8 1 H10.5 M4.5 5 H7 M9 5 H11.5 M1 9 H3.5 M5.5 9 H8 M9 9 H11.5" stroke="#5a5a5a" stroke-width="1"/></svg>
<!-- ===== DROPDOWN MENU ===== -->
<svg style="left:351px;top:89px" width="18" height="10" viewBox="0 0 18 10"><path d="M9 0.4 L17.4 10 H0.6Z" fill="#414141" style="filter:drop-shadow(0 0 2px rgba(0,0,0,.8))"/></svg>
<div class="a" id="menu">
<div class="a in"></div>
<div class="a mi" style="top:5px">按<span> 1:1 </span>裁剪</div>
<div class="a mi" style="top:37px">按<span> 3:2 </span>裁剪</div>
<div class="a mi" style="top:69px">按<span> 4:3 </span>裁剪</div>
<div class="a mi" style="top:101px">按<span> 16:9 </span>裁剪</div>
<div class="a mi" style="top:133px">按<span> 178:220 </span>裁剪</div>
<div class="a mi" style="top:165px">按标准<span>1</span>寸<span>/1R</span>裁剪</div>
<div class="a mi" style="top:197px">按标准<span>2</span>寸<span>/2R</span>裁剪</div>
<div class="a mi" style="top:229px">按大<span>2</span>寸<span>/2R</span>裁剪</div>
<div class="a mi" style="top:261px">按二代身份证裁剪</div>
<div class="a mi" style="top:293px">按护照照片裁剪</div>
<div class="a mi" style="top:325px">照片规格管理</div>
<div class="a mi" style="top:357px">添加常用比例</div>
<div class="a mi" style="top:389px">删除常用比例</div>
<div class="a" id="mtrk"></div><div class="a" id="mthb"></div><div class="a" id="msel"></div>
</div>
</div>
</body>
</html>
